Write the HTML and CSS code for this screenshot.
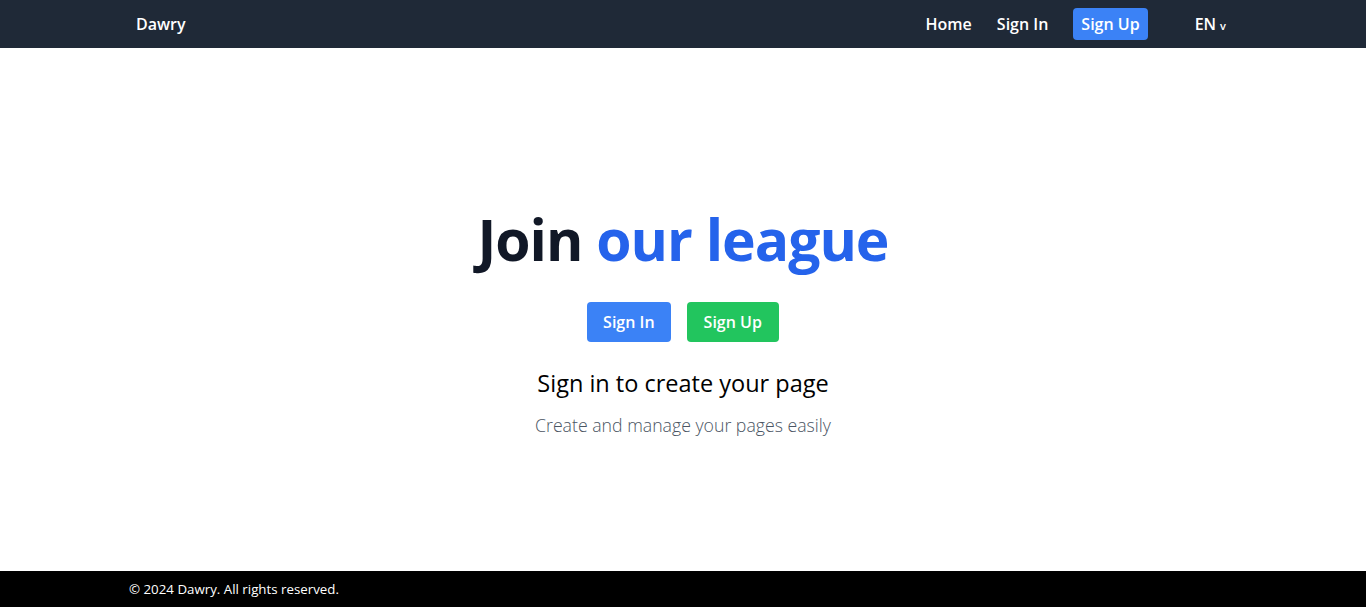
FILE: index.html
```html
<!DOCTYPE html>
<html lang="en">
<head>
<meta charset="utf-8">
<title>Dawry</title>
<link rel="stylesheet" href="styles.css">
</head>
<body>
<header class="topbar">
  <div class="topbar-inner">
    <a class="brand" href="#">Dawry</a>
    <nav class="nav">
      <a class="nav-link" href="#">Home</a>
      <a class="nav-link" href="#">Sign In</a>
      <a class="nav-btn" href="#">Sign Up</a>
      <div class="lang">EN<span class="caret">v</span></div>
    </nav>
  </div>
</header>
<main class="hero">
  <h1 class="hero-title">Join <span class="accent">our league</span></h1>
  <div class="hero-actions">
    <a class="btn btn-blue" href="#">Sign In</a>
    <a class="btn btn-green" href="#">Sign Up</a>
  </div>
  <h2 class="hero-sub">Sign in to create your page</h2>
  <p class="hero-text">Create and manage your pages easily</p>
</main>
<footer class="footer">
  <div class="footer-inner">© 2024 Dawry. All rights reserved.</div>
</footer>
</body>
</html>
```

FILE: styles.css
```css
* { box-sizing: border-box; }
html, body { margin: 0; padding: 0; }
body {
  font-family: "Open Sans", "Noto Sans", sans-serif;
  min-height: 100vh;
  display: flex;
  flex-direction: column;
  background: #fff;
}
a { text-decoration: none; color: inherit; }

.topbar {
  background: #1f2937;
  height: 48px;
  color: #fff;
}
.topbar-inner {
  width: 1094px;
  margin: 0 auto;
  padding-right: 4px;
  height: 48px;
  display: flex;
  align-items: center;
  justify-content: space-between;
}
.brand { font-weight: 600; font-size: 16px; }
.nav { display: flex; align-items: center; font-size: 16px; font-weight: 600; }
.nav-link { margin-right: 25px; }
.nav-btn {
  background: #3b82f6;
  border-radius: 4px;
  padding: 4px 8px;
  line-height: 24px;
  margin-right: 47px;
}
.lang { display: flex; align-items: baseline; }
.caret { font-size: 11px; margin-left: 4px; }

.hero {
  flex: 1;
  display: flex;
  flex-direction: column;
  align-items: center;
  justify-content: center;
  padding-top: 28px;
}
.hero-title {
  margin: 0 0 33px;
  font-size: 57px;
  line-height: 60px;
  font-weight: 700;
  color: #111827;
  letter-spacing: -1px;
}
.accent { color: #2563eb; }
.hero-actions { display: flex; gap: 16px; }
.btn {
  height: 40px;
  padding: 0 16px;
  display: flex;
  align-items: center;
  color: #fff;
  font-weight: 600;
  font-size: 16px;
  border-radius: 4px;
}
.btn-green { background: #22c55e; padding: 0 17px; }
.btn-blue { background: #3b82f6; }
.hero-sub {
  margin: 25px 0 0;
  font-size: 23.5px;
  line-height: 32px;
  font-weight: 400;
  color: #000;
}
.hero-text {
  margin: 12px 0 0;
  font-size: 17.7px;
  line-height: 28px;
  color: #4b5563;
  font-weight: 300;
}

.footer {
  background: #000;
  color: #fff;
  height: 36px;
  display: flex;
  align-items: center;
}
.footer-inner {
  width: 1108px;
  margin: 0 auto;
  font-size: 13.3px;
}
```
